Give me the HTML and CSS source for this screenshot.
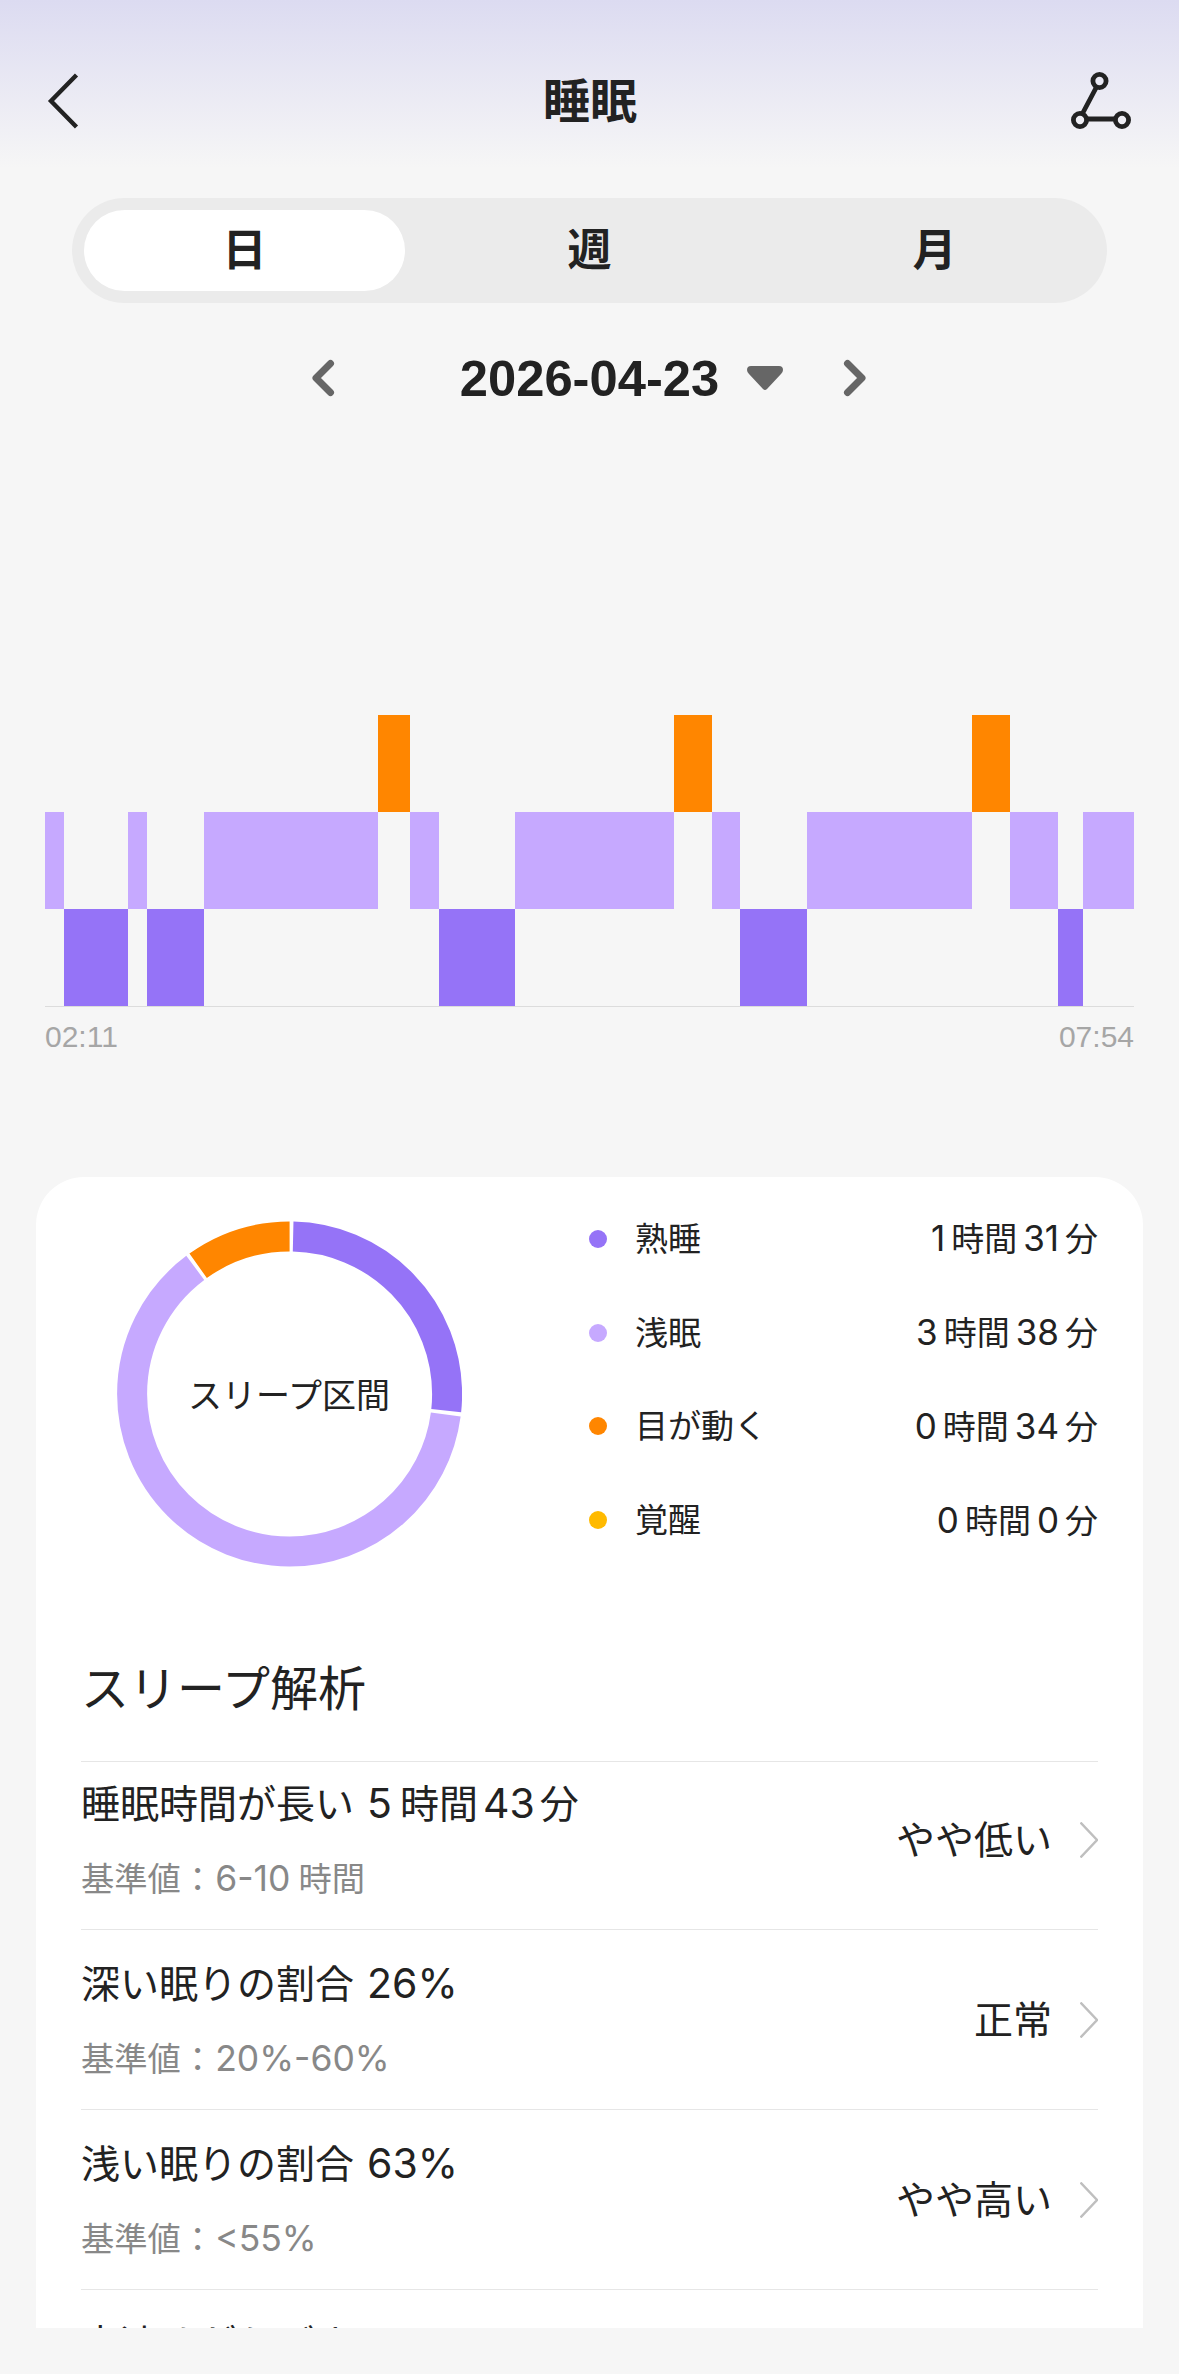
FILE: index.html
```html
<!DOCTYPE html>
<html lang="ja">
<head>
  <meta charset="UTF-8" />
  <meta name="viewport" content="width=device-width, initial-scale=1.0"/>
  <title>睡眠</title>
  <link rel="stylesheet" href="styles.css">
</head>
<body>

<header class="header">
  <svg class="back-icon" viewBox="0 0 32 56" width="32" height="56">
    <path d="M29.5 2 L4 28 L29.5 54" fill="none" stroke="#222" stroke-width="4.4"/>
  </svg>
  <h1>睡眠</h1>
  <svg class="share-icon" viewBox="0 0 64 60" width="64" height="60">
    <g fill="none" stroke="#222" stroke-width="4.8">
      <circle cx="30.5" cy="10" r="6.6"/>
      <circle cx="11" cy="49" r="6.6"/>
      <circle cx="53" cy="49" r="6.6"/>
      <path d="M27.5 16 L13.5 42.5 M17 48 H46.5"/>
    </g>
  </svg>
</header>

<div class="tabs">
  <div class="tab active">日</div>
  <div class="tab">週</div>
  <div class="tab">月</div>
</div>

<div class="date-row">
  <svg viewBox="0 0 24 38" width="24" height="38">
    <path d="M19.5 4.5 L5 19 L19.5 33.5" fill="none" stroke="#666" stroke-width="7" stroke-linecap="round" stroke-linejoin="round"/>
  </svg>
  <div class="date">
    <span>2026-04-23</span>
    <svg viewBox="0 0 36 24" width="36" height="24">
      <path d="M4 0 H32 Q36 0 36 4 Q36 6 34 8 L20 23 Q18 25 16 23 L2 8 Q0 6 0 4 Q0 0 4 0 Z" fill="#666"/>
    </svg>
  </div>
  <svg viewBox="0 0 24 38" width="24" height="38">
    <path d="M4.5 4.5 L19 19 L4.5 33.5" fill="none" stroke="#666" stroke-width="7" stroke-linecap="round" stroke-linejoin="round"/>
  </svg>
</div>

<!-- flex-grow is the length of each stage in minutes -->
<div class="chart">
  <div class="stage light" style="flex-grow: 6"></div>
  <div class="stage deep" style="flex-grow: 20"></div>
  <div class="stage light" style="flex-grow: 6"></div>
  <div class="stage deep" style="flex-grow: 18"></div>
  <div class="stage light" style="flex-grow: 55"></div>
  <div class="stage rem" style="flex-grow: 10"></div>
  <div class="stage light" style="flex-grow: 9"></div>
  <div class="stage deep" style="flex-grow: 24"></div>
  <div class="stage light" style="flex-grow: 50"></div>
  <div class="stage rem" style="flex-grow: 12"></div>
  <div class="stage light" style="flex-grow: 9"></div>
  <div class="stage deep" style="flex-grow: 21"></div>
  <div class="stage light" style="flex-grow: 52"></div>
  <div class="stage rem" style="flex-grow: 12"></div>
  <div class="stage light" style="flex-grow: 15"></div>
  <div class="stage deep" style="flex-grow: 8"></div>
  <div class="stage light" style="flex-grow: 16"></div>
</div>
<div class="chart-times">
  <span>02:11</span>
  <span>07:54</span>
</div>

<main class="card">
  <div class="summary">
    <div class="donut">
      <svg viewBox="0 0 346 346" width="346" height="346">
        <g fill="none" stroke-width="30" transform="rotate(-90 173 173)">
          <circle class="ring-deep" cx="173" cy="173.6" r="157.5" pathLength="360" stroke-dasharray="94.8 265.2" stroke-dashoffset="-1.3"/>
          <circle class="ring-light" cx="173" cy="173.6" r="157.5" pathLength="360" stroke-dasharray="225.7 134.3" stroke-dashoffset="-97.5"/>
          <circle class="ring-rem" cx="173" cy="173.6" r="157.5" pathLength="360" stroke-dasharray="35.5 324.5" stroke-dashoffset="-324.5"/>
        </g>
      </svg>
      <span class="donut-label">スリープ区間</span>
    </div>

    <div class="legend">
      <div class="legend-row">
        <span class="dot deep"></span>
        <span class="name">熟睡</span>
        <span class="value"><b>1</b>時間<b>31</b>分</span>
      </div>
      <div class="legend-row">
        <span class="dot light"></span>
        <span class="name">浅眠</span>
        <span class="value"><b>3</b>時間<b>38</b>分</span>
      </div>
      <div class="legend-row">
        <span class="dot rem"></span>
        <span class="name">目が動く</span>
        <span class="value"><b>0</b>時間<b>34</b>分</span>
      </div>
      <div class="legend-row">
        <span class="dot awake"></span>
        <span class="name">覚醒</span>
        <span class="value"><b>0</b>時間<b>0</b>分</span>
      </div>
    </div>
  </div>

  <h2>スリープ解析</h2>

  <div class="item first">
    <div class="item-text">
      <div class="item-title">睡眠時間が長い <b>5</b><span class="unit">時間</span><b class="mid">43</b>分</div>
      <div class="item-ref">基準値：<b>6-10</b><span class="unit">時間</span></div>
    </div>
    <span class="result">やや低い</span>
    <svg class="arrow" viewBox="0 0 18 36" width="18" height="36">
      <path d="M0.5 0.5 L17 18 L0.5 35.5" fill="none" stroke="#bfbfbf" stroke-width="2.4"/>
    </svg>
  </div>
  <div class="item">
    <div class="item-text">
      <div class="item-title">深い眠りの割合 <b>26%</b></div>
      <div class="item-ref">基準値：<b>20%-60%</b></div>
    </div>
    <span class="result">正常</span>
    <svg class="arrow" viewBox="0 0 18 36" width="18" height="36">
      <path d="M0.5 0.5 L17 18 L0.5 35.5" fill="none" stroke="#bfbfbf" stroke-width="2.4"/>
    </svg>
  </div>
  <div class="item">
    <div class="item-text">
      <div class="item-title">浅い眠りの割合 <b>63%</b></div>
      <div class="item-ref">基準値：<b>&lt;55%</b></div>
    </div>
    <span class="result">やや高い</span>
    <svg class="arrow" viewBox="0 0 18 36" width="18" height="36">
      <path d="M0.5 0.5 L17 18 L0.5 35.5" fill="none" stroke="#bfbfbf" stroke-width="2.4"/>
    </svg>
  </div>
  <div class="item">
    <div class="item-text">
      <div class="item-title">高速めがうごき <b>9%</b></div>
    </div>
  </div>
</main>

</body>
</html>
```
FILE: styles.css
```css
* {
  box-sizing: border-box;
}

body {
  font-family: Inter, "Noto Sans CJK JP", sans-serif;
  background: #f6f6f6 linear-gradient(#dcdbf1, #f6f6f6) no-repeat;
  background-size: 100% 168px;
  color: #222;
  margin: 0;
  height: 2374px;
  overflow: hidden;
}

.header {
  display: flex;
  align-items: center;
  justify-content: space-between;
  height: 198px;
  padding: 4px 46px 0 47px;
}

.header h1 {
  margin: 0;
  font-size: 47px;
  font-weight: bold;
  line-height: 60px;
}

/* same width on both sides keeps the title centred */
.back-icon {
  margin-right: 32px;
}

.tabs {
  display: flex;
  height: 105px;
  margin: 0 72px;
  padding: 12px 0;
  border-radius: 53px;
  background: #ebebeb;
}

.tab {
  flex: 1;
  display: flex;
  align-items: center;
  justify-content: center;
  margin: 0 12px;
  padding-bottom: 2px;
  border-radius: 41px;
  font-size: 44px;
  font-weight: bold;
  line-height: 58px;
}

.tab.active {
  background: #fff;
}

.date-row {
  display: flex;
  align-items: center;
  justify-content: space-between;
  width: 556px;
  height: 150px;
  margin: 0 auto 0 311px;
}

.date {
  display: flex;
  align-items: center;
  gap: 28px;
  margin-left: 65px;
  font-family: "Liberation Sans", Arial, sans-serif;
  font-size: 50.7px;
  font-weight: bold;
}

.chart {
  display: flex;
  height: 292px;
  margin: 262px 45px 0;
  border-bottom: 1px solid #dcdcdc;
}

.stage {
  flex: 0 0 0;
  height: 97px;
}

.stage.light {
  margin-top: 97px;
}

.stage.deep {
  margin-top: 194px;
}

.light {
  background: #c6a9ff;
}

.deep {
  background: #9573f7;
}

.rem {
  background: #ff8600;
}

.awake {
  background: #ffba00;
}

.chart-times {
  display: flex;
  justify-content: space-between;
  margin: 12px 45px 0;
  font-family: "Liberation Sans", Arial, sans-serif;
  font-size: 30px;
  line-height: 36px;
  color: #a6a6a6;
}

.card {
  height: 1151px;
  margin: 122px 36px 0;
  padding: 15px 45px 0;
  border-radius: 48px 48px 0 0;
  background: #fff;
  overflow: hidden;
}

.summary {
  display: flex;
  justify-content: space-between;
}

.donut {
  display: grid;
  width: 346px;
  height: 346px;
  margin: 29px 0 0 35px;
  place-items: center;
}

.donut svg,
.donut-label {
  grid-area: 1 / 1;
}

.ring-deep {
  stroke: #9573f7;
}

.ring-light {
  stroke: #c6a9ff;
}

.ring-rem {
  stroke: #ff8600;
}

.donut-label {
  padding-bottom: 2px;
  font-size: 34px;
}

.legend {
  width: 509px;
}

.legend-row {
  display: flex;
  align-items: center;
  height: 93.75px;
  font-size: 33px;
  line-height: 48px;
}

.dot {
  width: 18px;
  height: 18px;
  margin-right: 28px;
  border-radius: 50%;
}

.value {
  margin-left: auto;
}

b {
  font-weight: normal;
}

.value b {
  font-size: 35px;
  margin: 0 6px;
}

h2 {
  margin: 86px 0 36px;
  font-size: 48px;
  font-weight: normal;
  line-height: 72px;
}

.item {
  display: flex;
  align-items: center;
  height: 180px;
  border-top: 1px solid #e6e6e6;
}

.item.first {
  height: 168px;
  padding-bottom: 12px;
}

.item-text {
  flex: 1;
  height: 140px;
}

.item-title {
  height: 74px;
  font-size: 39px;
  line-height: 67px;
}

.item-title b {
  margin-left: 2px;
  font-size: 41px;
}

.item-title .mid {
  margin: 0 5px;
}

.item-ref {
  font-size: 33.3px;
  line-height: 70px;
  color: #888;
}

.item-ref b {
  margin-left: 1px;
  font-size: 35.5px;
}

.unit {
  margin-left: 8px;
}

.result {
  margin-bottom: 5px;
  font-size: 39px;
}

.arrow {
  margin-left: 28px;
}
```
